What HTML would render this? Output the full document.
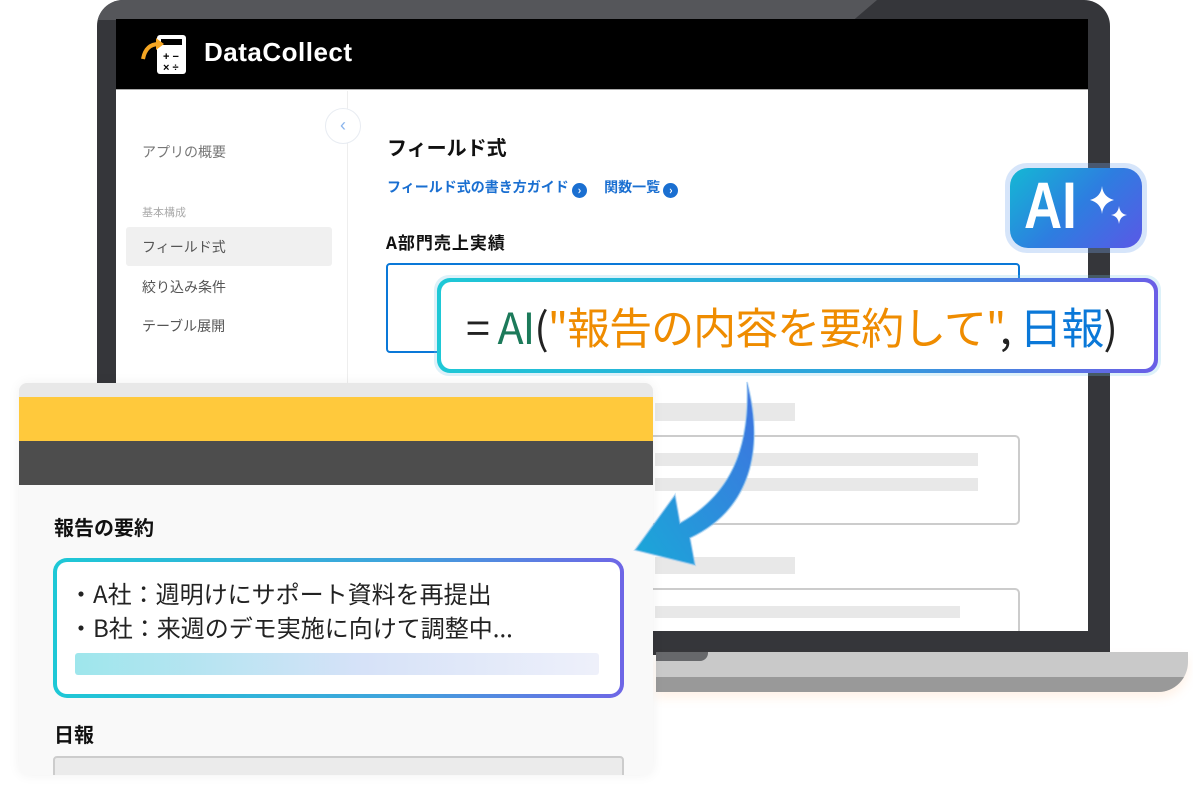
<!DOCTYPE html>
<html><head><meta charset="utf-8"><style>
*{margin:0;padding:0;box-sizing:border-box}
body{width:1193px;height:794px;background:#fff;position:relative;overflow:hidden;font-family:"Liberation Sans","Noto Sans CJK JP",sans-serif}
.a{position:absolute}
.jp{font-family:"Noto Sans CJK JP","Liberation Sans",sans-serif}
</style></head><body>
<!-- laptop -->
<div class="a" style="left:97px;top:0;width:1013px;height:655px;background:#35363a;border-radius:26px 26px 0 0;overflow:hidden">
  <div class="a" style="left:0;top:0;width:780px;height:20px;background:#55565a;clip-path:polygon(0 0,100% 0,97% 100%,0 100%)"></div>
</div>
<div class="a" style="left:656px;top:652px;width:532px;height:40px;background:#c9c9c9;border-radius:0 0 30px 0;overflow:hidden;box-shadow:0 6px 10px rgba(255,170,100,.15)">
  <div class="a" style="left:0;top:25px;width:100%;height:15px;background:#999"></div>
  <div class="a" style="left:0;top:0;width:52px;height:9px;background:#67686b;border-radius:0 0 8px 0"></div>
</div>
<!-- screen -->
<div class="a" style="left:116px;top:19px;width:972px;height:612px;background:#fff;overflow:hidden">
  <div class="a" style="left:0;top:0;width:100%;height:71px;background:#000;border-bottom:1px solid #aaa"></div>
  <svg class="a" style="left:24px;top:12px" width="50" height="48" viewBox="0 0 50 48">
    <rect x="17" y="4" width="29" height="39" rx="3" fill="#fff"/>
    <rect x="21" y="8" width="21" height="6" fill="#000"/>
    <path d="M3 28 C5 17 11 13 19 13" stroke="#f5a623" stroke-width="4" fill="none"/>
    <path d="M16 7 L24 13 L16 19 Z" fill="#f5a623"/>
    <text x="23" y="29" font-size="11" font-weight="bold" fill="#000" font-family="Liberation Sans">+ −</text>
    <text x="23" y="40" font-size="11" font-weight="bold" fill="#000" font-family="Liberation Sans">× ÷</text>
  </svg>
  <div class="a" style="left:88px;top:18px;color:#fff;font-size:26px;font-weight:bold;letter-spacing:.5px">DataCollect</div>
  <div class="a" style="left:231px;top:72px;width:1px;height:540px;background:#eee"></div>
  <div class="a" style="left:209px;top:89px;width:36px;height:36px;border-radius:50%;background:#fff;border:1px solid #e8ecf2;color:#8ab4ec;font-size:18px;text-align:center;line-height:32px">‹</div>
  <div class="a jp" style="left:26px;top:123px;font-size:14px;color:#777">アプリの概要</div>
  <div class="a jp" style="left:26px;top:185px;font-size:11px;color:#aaa">基本構成</div>
  <div class="a" style="left:10px;top:208px;width:206px;height:39px;background:#f0f0f0;border-radius:3px"></div>
  <div class="a jp" style="left:26px;top:218px;font-size:14px;color:#555">フィールド式</div>
  <div class="a jp" style="left:26px;top:258px;font-size:14px;color:#555">絞り込み条件</div>
  <div class="a jp" style="left:26px;top:297px;font-size:14px;color:#555">テーブル展開</div>
  <div class="a jp" style="left:271px;top:113px;font-size:20px;font-weight:bold;color:#111">フィールド式</div>
  <div class="a jp" style="left:271px;top:158px;font-size:14px;font-weight:bold;color:#1a6fd1">フィールド式の書き方ガイド <span style="display:inline-block;width:15px;height:15px;border-radius:50%;background:#1a6fd1;color:#fff;font-size:11px;line-height:15px;text-align:center;vertical-align:-2px">›</span>　 関数一覧 <span style="display:inline-block;width:15px;height:15px;border-radius:50%;background:#1a6fd1;color:#fff;font-size:11px;line-height:15px;text-align:center;vertical-align:-2px">›</span></div>
  <div class="a jp" style="left:270px;top:210px;font-size:17px;font-weight:bold;color:#111;letter-spacing:1px">A部門売上実績</div>
  <div class="a" style="left:270px;top:244px;width:634px;height:90px;border:2px solid #0a78d8;border-radius:4px"></div>
  <div class="a" style="left:539px;top:384px;width:140px;height:18px;background:#e8e8e8"></div>
  <div class="a" style="left:520px;top:416px;width:384px;height:90px;border:2px solid #ccc;border-radius:5px"></div>
  <div class="a" style="left:539px;top:434px;width:323px;height:13px;background:#e8e8e8"></div>
  <div class="a" style="left:539px;top:459px;width:323px;height:13px;background:#e8e8e8"></div>
  <div class="a" style="left:539px;top:538px;width:140px;height:17px;background:#e8e8e8"></div>
  <div class="a" style="left:520px;top:569px;width:384px;height:60px;border:2px solid #ccc;border-radius:5px"></div>
  <div class="a" style="left:539px;top:587px;width:305px;height:12px;background:#e8e8e8"></div>
</div>
<!-- AI badge -->
<div class="a" style="left:1005px;top:163px;width:142px;height:90px;border-radius:22px;background:rgba(120,170,240,.3)"></div>
<div class="a" style="left:1010px;top:168px;width:132px;height:80px;border-radius:18px;background:linear-gradient(135deg,#14b8d4,#2d7ee0 50%,#5a58e6)"></div>
<div class="a" style="left:1024px;top:172px;font-size:66px;line-height:66px;color:#fff;font-weight:bold;font-family:'Liberation Sans Narrow','Liberation Sans',sans-serif;transform:scaleX(.8);transform-origin:left">AI</div>
<svg class="a" style="left:1088px;top:184px" width="46" height="50" viewBox="0 0 46 50"><path d="M14 2 Q15 13 26 16 Q15 19 14 30 Q13 19 2 16 Q13 13 14 2Z" fill="#fff"/><path d="M31 22 Q32 30 39 31 Q32 32 31 40 Q30 32 23 31 Q30 30 31 22Z" fill="#fff"/></svg>
<!-- formula box -->
<div class="a" style="left:434px;top:275px;width:727px;height:101px;border-radius:15px;background:rgba(120,200,230,.25)"></div>
<div class="a" style="left:437px;top:278px;width:721px;height:95px;border-radius:13px;background:linear-gradient(90deg,#1ec8d6,#2fa0dc 60%,#6a5ee6)"></div>
<div class="a" style="left:441px;top:282px;width:713px;height:87px;border-radius:10px;background:#fff"></div>
<div class="a jp" style="left:466px;top:297px;font-size:43px;line-height:58px;white-space:nowrap;letter-spacing:-1px"><span style="color:#222">= </span><span style="color:#1c7a5a">AI</span><span style="color:#222">(</span><span style="color:#ef8c00">"報告の内容を要約して"</span><span style="color:#222">, </span><span style="color:#0a78d8">日報</span><span style="color:#222">)</span></div>
<!-- overlay card -->
<div class="a" style="left:19px;top:383px;width:634px;height:392px;border-radius:8px;background:#f9f9f9;overflow:hidden;box-shadow:0 0 12px rgba(0,0,0,.06)">
  <div class="a" style="left:0;top:0;width:100%;height:14px;background:#e8e8e8"></div>
  <div class="a" style="left:0;top:14px;width:100%;height:44px;background:#ffc93c"></div>
  <div class="a" style="left:0;top:58px;width:100%;height:44px;background:#4d4d4d"></div>
  <div class="a jp" style="left:35px;top:129px;font-size:20px;font-weight:bold;color:#111">報告の要約</div>
  <div class="a" style="left:34px;top:175px;width:571px;height:140px;border-radius:14px;background:linear-gradient(90deg,#1ec8d6,#3fa4dc 60%,#6e66e6)"></div>
  <div class="a" style="left:38px;top:179px;width:563px;height:132px;border-radius:10px;background:#fff"></div>
  <div class="a jp" style="left:50px;top:193px;font-size:24px;line-height:34px;color:#222;white-space:nowrap">・A社：週明けにサポート資料を再提出<br>・B社：来週のデモ実施に向けて調整中...</div>
  <div class="a" style="left:56px;top:270px;width:524px;height:22px;border-radius:3px;background:linear-gradient(90deg,#9ee6ec,#d6e2f8 55%,#eef0fa)"></div>
  <div class="a jp" style="left:35px;top:336px;font-size:20px;font-weight:bold;color:#111">日報</div>
  <div class="a" style="left:34px;top:373px;width:571px;height:40px;border-radius:4px;background:#ebebeb;border:2px solid #ccc"></div>
</div>
<!-- arrow -->
<svg class="a" style="left:620px;top:380px" width="160" height="200" viewBox="0 0 160 200">
  <defs><linearGradient id="g" x1="0" y1="1" x2="1" y2="0"><stop offset="0" stop-color="#1aa8d8"/><stop offset="1" stop-color="#3f72e0"/></linearGradient></defs>
  <path d="M127 2 C145 70 130 130 70 158 L75 185 L15 170 L55 115 L60 143 C110 115 130 70 127 2Z" fill="url(#g)" stroke="rgba(150,200,240,.5)" stroke-width="2"/>
</svg>
</body></html>
